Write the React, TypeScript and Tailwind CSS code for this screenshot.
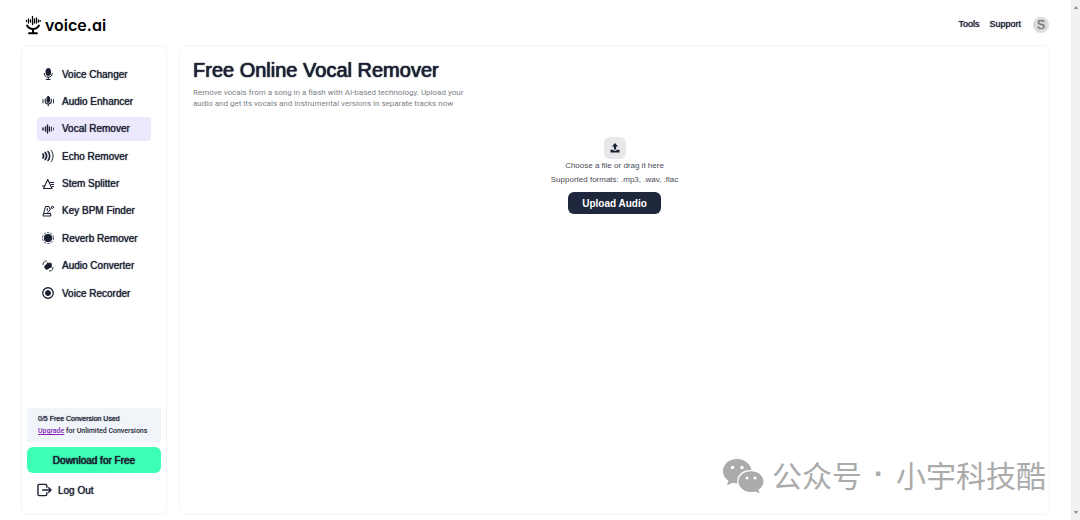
import type { ReactNode } from 'react';

function Icon({ children }: { children: ReactNode }) {
  return (
    <svg
      viewBox="0 0 24 24"
      className="h-3 w-3 shrink-0"
      fill="none"
      stroke="currentColor"
      strokeWidth="2"
      strokeLinecap="round"
      strokeLinejoin="round"
      aria-hidden="true"
    >
      {children}
    </svg>
  );
}

const tools: { label: string; icon: ReactNode }[] = [
  {
    label: 'Voice Changer',
    icon: (
      <>
        <rect x="8" y="1" width="9" height="14" rx="4.500" fill="currentColor" />
        <path d="M4.500 11c0 5 3.500 7.500 8 7.500s8-2.500 8-7.500M12.500 18.500V23M8.500 23h8" />
      </>
    ),
  },
  {
    label: 'Audio Enhancer',
    icon: (
      <>
        <rect x="10" y="3" width="5" height="12" rx="2.500" fill="currentColor" />
        <path d="M6.500 8v5c0 3.500 2.500 5 6 5s6-1.500 6-5V8M12.500 18v3.500" strokeWidth="2.200" />
        <path d="M2 9v7M23 9v7" strokeWidth="1.800" />
      </>
    ),
  },
  {
    label: 'Vocal Remover',
    icon: (
      <>
        <path d="M2 10v4M7 8v8M11 4v16M15 8v8" strokeWidth="2.800" />
        <path d="M19 8v8M23 10v4" strokeWidth="1.600" />
      </>
    ),
  },
  {
    label: 'Echo Remover',
    icon: (
      <>
        <path d="M2 8c1.500 2.500 1.500 5.500 0 8M6.500 5c3.500 4.500 3.500 9.500 0 14" strokeWidth="3.400" />
        <path d="M12 3c4.500 5 4.500 13 0 18" strokeWidth="3.200" />
        <path d="M18.500 1c5 7 5 15 0 22" strokeWidth="2" />
      </>
    ),
  },
  {
    label: 'Stem Splitter',
    icon: (
      <>
        <path d="M11.500 3 20 21H3Z" strokeWidth="2.200" />
        <path d="M0 16h5M17 9h7M19 13h5M21 17h3" />
      </>
    ),
  },
  {
    label: 'Key BPM Finder',
    icon: (
      <>
        <path d="M15 7 14 3H7L2 22h16l-1.500-6M4 17h12M10 17l9-11M10.500 7v4" />
        <circle cx="21" cy="4.500" r="2.200" />
      </>
    ),
  },
  {
    label: 'Reverb Remover',
    icon: (
      <>
        <circle cx="12" cy="12" r="7.500" fill="currentColor" />
        <circle cx="12" cy="12" r="11" strokeWidth="1.600" strokeDasharray="4.500 2.400" strokeLinecap="butt" />
      </>
    ),
  },
  {
    label: 'Audio Converter',
    icon: (
      <>
        <circle cx="10" cy="14" r="4.500" fill="currentColor" />
        <rect x="10" y="6.500" width="8.500" height="8.500" rx="1" fill="currentColor" />
        <path d="M2 9c0-4 3-7 7-7M22 15c0 4-3 7-7 7" strokeDasharray="5 2.500" />
      </>
    ),
  },
  {
    label: 'Voice Recorder',
    icon: (
      <>
        <circle cx="12" cy="12" r="10.500" strokeWidth="2.600" />
        <circle cx="12" cy="12" r="5" fill="currentColor" />
      </>
    ),
  },
];

function Logo() {
  return (
    <a href="#home" className="flex items-center gap-1 text-black" aria-label="voice.ai">
      <svg viewBox="0 0 16 20" className="h-5 w-4" fill="none" stroke="currentColor" strokeLinecap="round" aria-hidden="true">
        <path d="M1.500 5.500v1M3.500 4v4M5.500 5v2M7.500 1.500v8M9.500 4v4M11.500 3v5M13.500 5v2M15.200 5.700v.6" strokeWidth="1.300" />
        <path d="M2 10.500c1.500 2.600 3.500 3.500 6 3.500s4.500-.9 6-3.500M8 14v4M4 18.200h8" strokeWidth="1.900" />
      </svg>
      <span className="font-['Inter',sans-serif] text-base font-semibold [font-feature-settings:'cv11']">voice.ai</span>
    </a>
  );
}

function Sidebar() {
  return (
    <aside className="flex w-[146px] shrink-0 flex-col rounded-lg border border-[#f3f3f4] px-[5px] pt-4 pb-3.5">
      <nav className="mx-2.5 flex h-[243px] flex-col justify-between">
        {tools.map(({ label, icon }) => (
          <a
            key={label}
            href={'#' + label.toLowerCase().replaceAll(' ', '-')}
            className={
              label === 'Vocal Remover'
                ? 'flex h-6 items-center gap-2 rounded-sm bg-[#ece9fd] px-[5px]'
                : 'flex h-6 items-center gap-2 rounded-sm px-[5px]'
            }
          >
            <Icon>{icon}</Icon>
            <span className="text-[10px] whitespace-nowrap [text-shadow:0_0_1px_currentColor]">{label}</span>
          </a>
        ))}
      </nav>
      <div className="mt-auto bg-[#f1f5f9] px-[11px] py-1 text-[7px] leading-[13px] whitespace-nowrap">
        <p className="[text-shadow:0_0_1px_currentColor]">0/5 Free Conversion Used</p>
        <p className="font-['Roboto',sans-serif] font-medium">
          <a href="#upgrade" className="text-[#8526b5] underline">Upgrade</a> for Unlimited Conversions
        </p>
      </div>
      <button type="button" className="mt-[5px] h-[26px] rounded-md bg-[#3dffb5] text-[10px] [text-shadow:0_0_1px_currentColor,0_0_1px_currentColor]">
        Download for Free
      </button>
      <button type="button" className="mt-[7px] flex h-5 items-center gap-1.5 px-2.5 text-[10px] [text-shadow:0_0_1px_currentColor]">
        <svg viewBox="0 0 16 14" className="h-3.5 w-[15px]" fill="none" stroke="currentColor" strokeWidth="1.500" strokeLinecap="round" strokeLinejoin="round" aria-hidden="true">
          <path d="M10.500 4V2.500c0-.8-.5-1.500-1.500-1.500H2.500C1.500 1 1 1.700 1 2.500v9c0 .8.5 1.500 1.500 1.500H9c1 0 1.500-.7 1.500-1.500V10M6 7h9M12.500 4.500 15 7l-2.500 2.500" />
        </svg>
        Log Out
      </button>
    </aside>
  );
}

function Watermark() {
  return (
    <div className="absolute right-[34px] bottom-[26px] flex items-start gap-2 text-[#ababab]">
      <svg viewBox="0 0 42 36" className="h-9 w-[42px]" aria-hidden="true">
        <path fill="currentColor" d="M15 1C6.700 1 1 6.500 1 13.300c0 4 2 7.200 5.500 9.500L5 27.500l5.400-2.700c1.800.5 3.300.7 5.100.7C14 18 20 11.500 29.500 12 28 5 22 1 15 1Z" />
        <path fill="currentColor" d="M29 13.200c-7.200 0-12.500 4.700-12.500 10.300S21.800 34 29 34c1.600 0 3-.2 4.400-.6l4.200 2.100-1.200-3.700c3-2 5-4.900 5-8.300 0-5.600-5.200-10.300-12.400-10.300Z" />
        <g fill="#fff">
          <circle cx="10.500" cy="9.500" r="1.800" />
          <circle cx="20" cy="9.500" r="1.800" />
          <circle cx="25" cy="20" r="1.500" />
          <circle cx="33" cy="20" r="1.500" />
        </g>
      </svg>
      <p className="flex font-['Noto_Sans_CJK_SC',sans-serif] text-[30px] leading-8 whitespace-nowrap">
        <span>公众号</span>
        <span className="flex w-[34px] justify-center font-['Liberation_Sans',sans-serif] font-bold">·</span>
        <span>小宇科技酷</span>
      </p>
    </div>
  );
}

export default function App() {
  return (
    <div className="relative flex min-h-screen bg-white font-['Liberation_Sans',Arial,sans-serif] text-[#1b2033]">
      <div className="flex min-w-0 flex-1 flex-col pr-[21px] pb-[5px] pl-[21px]">
        <header className="flex h-[45px] shrink-0 items-center justify-between pt-1 pr-px pl-1">
          <Logo />
          <nav className="flex items-center text-[9px] [text-shadow:0_0_1px_currentColor]">
            <a href="#tools">Tools</a>
            <a href="#support" className="ml-2.5">Support</a>
            <button type="button" aria-label="Account" className="ml-3 flex h-4 w-4 items-center justify-center rounded-full bg-[#dcdcdc] text-xs text-[#777] [text-shadow:0_0_1px_currentColor]">
              S
            </button>
          </nav>
        </header>
        <div className="flex flex-1 gap-3">
          <Sidebar />
          <main className="flex-1 rounded-lg border border-[#f3f3f4] px-[13px] pt-3">
            <h1 className="text-xl leading-6 [text-shadow:0_0_1px_currentColor,0_0_1px_currentColor]">Free Online Vocal Remover</h1>
            <p className="mt-[5px] font-['Roboto',sans-serif] text-[8px] leading-[11px] text-[#7b7f89]">
              Remove vocals from a song in a flash with AI-based technology. Upload your
              <br />
              audio and get its vocals and instrumental versions in separate tracks now
            </p>
            <div className="mt-7 flex flex-col items-center">
              <span className="flex h-[22px] w-[22px] items-center justify-center rounded-md bg-[#e8e8ea]">
                <svg viewBox="0 0 10 10" className="h-2.5 w-2.5" fill="currentColor" aria-hidden="true">
                  <path d="M5 0 8 3.400H6.100V6.500H3.900V3.400H2ZM.5 6.800h2.600c.3.700 1 1 1.900 1s1.600-.3 1.900-1h2.600v2.700h-9Z" />
                </svg>
              </span>
              <p className="text-center text-[8px] leading-[14px] text-[#4a4d56]">
                Choose a file or drag it here
                <br />
                Supported formats: .mp3, .wav, .flac
              </p>
              <button type="button" className="mt-[5px] h-[22px] rounded-md bg-[#1e273b] px-3.5 text-[10px] font-bold text-white">
                Upload Audio
              </button>
            </div>
          </main>
        </div>
      </div>
      <div className="flex w-[9px] shrink-0 flex-col items-center justify-between bg-[#f1f1f1] py-1.5 text-[#8a8a8a]" aria-hidden="true">
        <svg viewBox="0 0 4 3" className="h-[3px] w-1" fill="currentColor"><path d="M0 3 2 0l2 3Z" /></svg>
        <svg viewBox="0 0 4 3" className="h-[3px] w-1" fill="currentColor"><path d="M0 0 2 3l2-3Z" /></svg>
      </div>
      <Watermark />
    </div>
  );
}
